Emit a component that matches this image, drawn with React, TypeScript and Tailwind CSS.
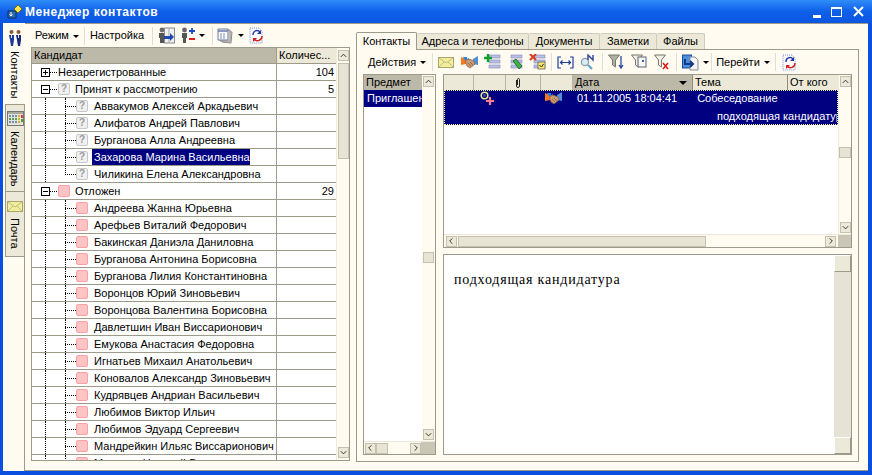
import type { ReactNode } from 'react';

const line = 'border-[#9d9a8a]';

function Caret() {
  return <span className="inline-block w-0 h-0 border-x-[3px] border-x-transparent border-t-[3px] border-t-black ml-[4px] align-middle" />;
}

function Sep({ ml, mr }: { ml: string; mr: string }) {
  return <div className={`w-[2px] h-[18px] bg-[#e2decd] border-r border-white shrink-0 ${ml} ${mr}`} />;
}

function QuestionIcon() {
  return (
    <div className="w-[12px] h-[12px] shrink-0 rounded-[2px] border border-[#c8c8c8] bg-[#f0f0f0] flex items-center justify-center text-[10px] leading-none font-bold text-[#9a9a9a]">
      ?
    </div>
  );
}

function PinkIcon() {
  return <div className="w-[12px] h-[12px] shrink-0 rounded-[2px] border border-[#ff9fa4] bg-[#ffc4c4]" />;
}

function Envelope({ w = 16, h = 11 }: { w?: number; h?: number }) {
  return (
    <svg width={w} height={h} viewBox="0 0 16 11" className="shrink-0">
      <rect x="0.5" y="0.5" width="15" height="10" fill="#f3eda0" stroke="#a8a868" />
      <path d="M1 1l7 5 7-5M1 10l5-5M15 10l-5-5" fill="none" stroke="#c0bd78" />
    </svg>
  );
}

function Handshake() {
  return (
    <svg width="17" height="13" viewBox="0 0 17 13" className="shrink-0">
      <path d="M0 1l5 2v5L0 9z" fill="#f47a1c" />
      <path d="M17 0l-5 3v5l5 1z" fill="#4f8ed8" />
      <path d="M2 1h4v2l2-1v2H4z" fill="#2f7fe0" />
      <path d="M4 5l4-2 5 2 1 3-5 4-3-2z" fill="#c99a78" stroke="#8a5a3c" strokeWidth="0.7" />
      <path d="M7 7l3 3M9 6l3 3" stroke="#8a5a3c" strokeWidth="0.7" />
    </svg>
  );
}

function ListIcon({ kind }: { kind: 'add' | 'edit' | 'del' }) {
  return (
    <svg width="17" height="16" viewBox="0 0 17 16" className="shrink-0">
      <rect x="5" y="1" width="11" height="3" fill="#b9bfe6" stroke="#8088b8" strokeWidth="0.6" />
      <rect x="5" y="6" width="11" height="3" fill="#b9bfe6" stroke="#8088b8" strokeWidth="0.6" />
      <rect x="5" y="11" width="11" height="3" fill="#b9bfe6" stroke="#8088b8" strokeWidth="0.6" />
      {kind === 'add' && <path d="M4 0v8M0 4h8" stroke="#12a02c" strokeWidth="2.4" />}
      {kind === 'edit' && <path d="M7 7l3-2 6 7-3 3z" fill="#36b83c" stroke="#222" strokeWidth="0.6" />}
      {kind === 'del' && (
        <g>
          <path d="M1 0l6 6M7 0L1 6" stroke="#e03a1c" strokeWidth="2" />
          <rect x="9" y="8" width="7" height="7" fill="#f5e66a" stroke="#555" strokeWidth="0.7" />
          <path d="M10.5 11l2 2 2-3" fill="none" stroke="#333" />
        </g>
      )}
    </svg>
  );
}

function WidthIcon() {
  return (
    <svg width="17" height="13" viewBox="0 0 17 13" className="shrink-0">
      <path d="M4 1H1v11h3M13 1h3v11h-3" fill="none" stroke="#1c3f9c" strokeWidth="1.2" />
      <path d="M3.5 6.5h10M5.5 4.5l-2 2 2 2M11.5 4.5l2 2-2 2" fill="none" stroke="#1c3f9c" strokeWidth="1.2" />
    </svg>
  );
}

function SearchN() {
  return (
    <svg width="16" height="16" viewBox="0 0 16 16" className="shrink-0">
      <circle cx="5" cy="8" r="3.6" fill="#d8eef2" stroke="#8aa0a8" strokeWidth="1.3" />
      <path d="M8 11l4 4" stroke="#5aa0c8" strokeWidth="2" />
      <path d="M8 6V1l5 5V1" fill="none" stroke="#2840a0" strokeWidth="1.4" />
    </svg>
  );
}

function Funnel({ kind }: { kind: 'lines' | 'win' | 'x' }) {
  return (
    <svg width="16" height="16" viewBox="0 0 16 16" className="shrink-0">
      <path d="M0.5 1h11l-4 5v7l-3-2V6z" fill={kind === 'lines' ? '#b0b0a4' : '#f2f0e6'} stroke="#77776c" />
      {kind === 'lines' && <path d="M13 2v11M11 11l2 3 2-3" fill="none" stroke="#24489c" strokeWidth="1.3" />}
      {kind === 'win' && (
        <g>
          <rect x="7" y="3" width="8" height="10" fill="#f6f6f4" stroke="#5c6470" />
          <rect x="11" y="6" width="2" height="2" fill="#2f5fae" />
        </g>
      )}
      {kind === 'x' && <path d="M9 9l5 6M14 9l-5 6" stroke="#e01414" strokeWidth="1.5" />}
    </svg>
  );
}

function MoveDoc() {
  return (
    <svg width="17" height="17" viewBox="0 0 17 17" className="shrink-0">
      <rect x="0.5" y="1" width="9" height="13" fill="#4b90e0" stroke="#1c4c9c" />
      <path d="M8 3h5l3 3v10H8z" fill="#f4f4f4" stroke="#8a8a98" />
      <path d="M3 5v5h7M8 7l3 3-3 3" fill="none" stroke="#12388c" strokeWidth="2" />
    </svg>
  );
}

function Refresh() {
  return (
    <svg width="16" height="17" viewBox="0 0 16 17" className="shrink-0">
      <path d="M1 1h9l3 3v12H1z" fill="#fafafc" stroke="#7f8fd8" strokeDasharray="1 1" />
      <path d="M4 8a4 4 0 0 1 7-3" fill="none" stroke="#2036a8" strokeWidth="1.4" />
      <path d="M12 3v4H8z" fill="#2036a8" />
      <path d="M13 9a4.5 4.5 0 0 1-8 3" fill="none" stroke="#d81c1c" strokeWidth="1.4" />
      <path d="M4 15v-4h4z" fill="#d81c1c" />
    </svg>
  );
}

function People() {
  return (
    <svg width="14" height="16" viewBox="0 0 14 16" className="shrink-0">
      <circle cx="3.5" cy="2" r="2" fill="#8a5a3c" />
      <circle cx="10.5" cy="2" r="2" fill="#8a5a3c" />
      <path d="M1 5h5v5l-1 6H3l-1-6z" fill="#1c3c9c" />
      <path d="M8 5h5l-0 5-1 6h-2l-1-6z" fill="#14287c" />
      <path d="M3 5h1v3H3zM10 5h1v3h-1z" fill="#e8e8e8" />
    </svg>
  );
}

function Chart() {
  return (
    <svg width="17" height="15" viewBox="0 0 17 15" className="shrink-0">
      <rect x="0.5" y="0.5" width="16" height="14" fill="#e8e4d4" stroke="#777" />
      <rect x="1" y="1" width="15" height="2" fill="#a8a8a0" />
      {[2, 5, 8, 11].map((x) =>
        [4, 7, 10].map((y) => <rect key={`${x}-${y}`} x={x} y={y} width="2" height="2" fill={x === 11 ? '#d8b030' : y === 7 ? '#5a9a5a' : '#6a90c0'} />),
      )}
      <rect x="14" y="4" width="2" height="3" fill="#d04040" />
      <rect x="14" y="8" width="2" height="3" fill="#40a040" />
    </svg>
  );
}

function FormArrow() {
  return (
    <svg width="17" height="17" viewBox="0 0 17 17" className="shrink-0">
      <circle cx="4" cy="3" r="2.4" fill="#6a6a6a" />
      <path d="M1 6h6v5H6v5H2v-5H1z" fill="#555" />
      <rect x="6.5" y="1" width="10" height="15" fill="#eef0f4" stroke="#8a8a8a" />
      <path d="M11 1v15" stroke="#aaa" />
      <path d="M6 9h6V6l4 4-4 4v-2H6z" fill="#1c48b0" />
    </svg>
  );
}

function PlusMinusPerson() {
  return (
    <svg width="14" height="17" viewBox="0 0 14 17" className="shrink-0">
      <circle cx="3.5" cy="3" r="2.4" fill="#666" />
      <path d="M1 6h5v5H5v5H2v-5H1z" fill="#555" />
      <path d="M11 1v6M8 4h6" stroke="#1c48d0" strokeWidth="1.8" />
      <path d="M8 12h6" stroke="#e01c1c" strokeWidth="2" />
    </svg>
  );
}

function Pages() {
  return (
    <svg width="17" height="16" viewBox="0 0 17 16" className="shrink-0">
      <path d="M5 3l10 1-1 11-9-1z" fill="#e4e0cc" stroke="#888" />
      <path d="M3 2l10 0v11H3z" fill="#f2efe2" stroke="#888" />
      <path d="M1 1h10v11H1z" fill="#fafafa" stroke="#6a7aa0" />
      <path d="M1 3h10" stroke="#7080b0" strokeWidth="1.6" />
      <path d="M3 6h2M6 6h2M3 8h2M6 8h2M3 10h2M6 10h2" stroke="#8090b8" />
    </svg>
  );
}

function KeyPlus() {
  return (
    <svg width="15" height="15" viewBox="0 0 15 15" className="shrink-0">
      <circle cx="4.5" cy="4.5" r="3.3" fill="none" stroke="#e4e488" strokeWidth="1.6" />
      <circle cx="4.5" cy="4.5" r="1.4" fill="#3a4ea8" />
      <path d="M10 6v8M6 10h8" stroke="#ff7f8c" strokeWidth="2.2" />
    </svg>
  );
}

function Clip() {
  return (
    <svg width="6" height="12" viewBox="0 0 6 12" className="shrink-0">
      <path d="M1.5 3v6a1.5 1.5 0 0 0 3 0V2.5a1 1 0 0 0-2 0V8" fill="none" stroke="#222" strokeWidth="1" />
    </svg>
  );
}

function TreeBox({ open }: { open: boolean }) {
  return (
    <div className="w-[9px] h-[9px] shrink-0 border border-black bg-white flex items-center justify-center relative">
      <div className="w-[5px] h-px bg-black" />
      {!open && <div className="absolute w-px h-[5px] bg-black" />}
    </div>
  );
}

function Row({ children, count }: { children: ReactNode; count?: string }) {
  return (
    <div className={`flex h-[17px] shrink-0 border-b ${line}`}>
      <div className={`w-[245px] shrink-0 h-full flex items-center border-r whitespace-nowrap ${line}`}>{children}</div>
      <div className="flex-1 h-full flex items-center justify-end pr-[2px]">{count}</div>
    </div>
  );
}

function Group({ name, count, open, icon }: { name: string; count: string; open: boolean; icon?: ReactNode }) {
  return (
    <Row count={count}>
      <div className="w-[9px] shrink-0" />
      <TreeBox open={open} />
      <div className="w-[7px] border-t border-dotted border-black shrink-0" />
      {icon && <div className="w-[1px]" />}
      {icon}
      <span className={icon ? 'ml-[5px]' : 'ml-[1px]'}>{name}</span>
    </Row>
  );
}

function Child({ name, icon, selected, last }: { name: string; icon: ReactNode; selected?: boolean; last?: boolean }) {
  return (
    <Row>
      <div className="w-[13px] shrink-0" />
      <div className="w-[20px] h-full shrink-0 border-l border-dotted border-black" />
      <div className="w-[11px] h-full shrink-0 relative flex items-center">
        <div className={`absolute left-0 top-0 border-l border-dotted border-black ${last ? 'h-[9px]' : 'h-full'}`} />
        <div className="w-full border-t border-dotted border-black" />
      </div>
      {icon}
      <span className={selected ? 'ml-[4px] pl-[2px] h-[16px] leading-[16px] bg-[#000080] text-white w-[158px]' : 'ml-[6px]'}>{name}</span>
    </Row>
  );
}

function UpBtn({ dir = 'up' }: { dir?: 'up' | 'down' | 'left' | 'right' }) {
  const paths = { up: 'M2 6l3-3 3 3', down: 'M2 3l3 3 3-3', left: 'M6 2L3 5l3 3', right: 'M4 2l3 3-3 3' };
  return (
    <div className="w-[11px] h-[11px] shrink-0 bg-[#ece9d8] border border-[#c4c1b0] flex items-center justify-center">
      <svg width="10" height="10" viewBox="0 0 10 10">
        <path d={paths[dir]} fill="none" stroke="#222" strokeWidth="1" />
      </svg>
    </div>
  );
}

const waiting = ['Аввакумов Алексей Аркадьевич', 'Алифатов Андрей Павлович', 'Бурганова Алла Андреевна', 'Захарова Марина Васильевна', 'Чиликина Елена Александровна'];
const delayed = [
  'Андреева Жанна Юрьевна',
  'Арефьев Виталий Федорович',
  'Бакинская Даниэла Даниловна',
  'Бурганова Антонина Борисовна',
  'Бурганова Лилия Константиновна',
  'Воронцов Юрий Зиновьевич',
  'Воронцова Валентина Борисовна',
  'Давлетшин Иван Виссарионович',
  'Емукова Анастасия Федоровна',
  'Игнатьев Михаил Анатольевич',
  'Коновалов Александр Зиновьевич',
  'Кудрявцев Андриан Васильевич',
  'Любимов Виктор Ильич',
  'Любимов Эдуард Сергеевич',
  'Мандрейкин Ильяс Виссарионович',
  'Миронов Николай Васильевич',
];

const tabs = [
  { name: 'Адреса и телефоны', w: 'w-[112px]' },
  { name: 'Документы', w: 'w-[71px]' },
  { name: 'Заметки', w: 'w-[57px]' },
  { name: 'Файлы', w: 'w-[48px]' },
];

export default function App() {
  return (
    <div className="w-[872px] h-[475px] overflow-hidden flex flex-col bg-[#0b4fe0] font-['Liberation_Sans',sans-serif] text-[11px] text-black">
      <div className="h-[23px] shrink-0 flex items-center bg-gradient-to-b from-[#2f8cf8] via-[#0f5fe8] to-[#0c56e2] pl-[5px] pr-[6px]">
        <svg width="18" height="18" viewBox="0 0 18 18" className="shrink-0">
          <path d="M3 8h8v7H3z" fill="#2a6ab0" stroke="#0c2c60" />
          <path d="M6 9v4M4.5 11.5L6 13l1.5-1.5" stroke="#fff" fill="none" />
          <path d="M13 2l4 4-4 4-4-4z" fill="#ffe84a" stroke="#7a6a10" />
        </svg>
        <span className="ml-[2px] text-white font-bold text-[12px] tracking-[0.55px]">Менеджер контактов</span>
        <div className="ml-auto flex items-center pr-[2px]">
          <div className="w-[8px] h-[3px] bg-white mt-[9px]" />
          <div className="w-[11px] h-[10px] ml-[10px] border border-white border-t-[2px]" />
          <svg width="11" height="11" viewBox="0 0 11 11" className="ml-[11px]">
            <path d="M1 1l9 9M10 1l-9 9" stroke="#fff" strokeWidth="2" />
          </svg>
        </div>
      </div>

      <div className="h-[448px] ml-[3px] mr-[4px] shrink-0 flex bg-[#fffbf0]">
        {/* vertical tabs */}
        <div className="w-[21px] shrink-0 flex flex-col pl-[2px]">
          <div className="h-[81px] -mr-px relative z-10 bg-[#fffbf0] flex flex-col items-center pt-[7px]">
            <People />
            <span className="[writing-mode:vertical-rl] mt-[5px] leading-[14px]">Контакты</span>
          </div>
          <div className={`h-[88px] bg-[#ece9d8] border-l border-b border-t ${line} flex flex-col items-center pt-[6px]`}>
            <Chart />
            <span className="[writing-mode:vertical-rl] mt-[5px] leading-[14px]">Календарь</span>
          </div>
          <div className={`h-[65px] bg-[#ece9d8] border-l border-b ${line} flex flex-col items-center pt-[9px]`}>
            <Envelope />
            <span className="[writing-mode:vertical-rl] mt-[6px] leading-[14px]">Почта</span>
          </div>
        </div>

        <div className={`flex-1 flex border-l border-t border-b ${line}`}>
          {/* left pane */}
          <div className="w-[330px] shrink-0 flex flex-col pl-[6px] pr-[5px]">
            <div className="h-[23px] shrink-0 flex items-center">
              <span className="ml-[4px]">Режим<Caret /></span>
              <Sep ml="ml-[5px]" mr="mr-[4px]" />
              <span>Настройка</span>
              <Sep ml="ml-[8px]" mr="mr-[4px]" />
              <FormArrow />
              <div className="w-[6px]" />
              <PlusMinusPerson />
              <Caret />
              <Sep ml="ml-[7px]" mr="mr-[3px]" />
              <Pages />
              <Caret />
              <div className="w-[5px]" />
              <Refresh />
            </div>
            <div className={`h-[414px] shrink-0 flex border ${line} bg-white overflow-hidden`}>
              <div className="w-[304px] shrink-0 flex flex-col overflow-hidden">
                <div className={`h-[16px] shrink-0 flex bg-[#ece9d8] border-b ${line}`}>
                  <div className={`w-[245px] shrink-0 pl-[2px] bg-[#bdb9a9] border-r ${line} leading-[15px]`}>Кандидат</div>
                  <div className="flex-1 pl-[2px] leading-[15px] whitespace-nowrap overflow-hidden">Количес...</div>
                </div>
                <Group name="Незарегистрованные" count="104" open={false} />
                <Group name="Принят к рассмотрению" count="5" open icon={<QuestionIcon />} />
                {waiting.map((n, i) => (
                  <Child key={n} name={n} icon={<QuestionIcon />} selected={i === 3} last={i === 4} />
                ))}
                <Group name="Отложен" count="29" open icon={<PinkIcon />} />
                {delayed.map((n) => (
                  <Child key={n} name={n} icon={<PinkIcon />} />
                ))}
              </div>
              <div className="flex-1 bg-[#fffbf0] flex flex-col items-center py-[2px] border-l border-[#f0ecdc]">
                <UpBtn />
                <div className="w-[11px] h-[96px] my-[2px] bg-[#e8e4d4] border border-[#c4c1b0]" />
                <div className="flex-1" />
                <UpBtn dir="down" />
              </div>
            </div>
          </div>

          {/* right pane */}
          <div className="flex-1 flex flex-col pl-[1px] pt-[8px] pr-[9px]">
            <div className="h-[17px] shrink-0 flex items-end">
              <div className={`w-[61px] h-[18px] -mb-px relative z-10 border border-b-0 ${line} rounded-t-[2px] bg-[#fffbf0] text-center leading-[16px]`}>Контакты</div>
              {tabs.map((t) => (
                <div key={t.name} className={`${t.w} h-[16px] border-t border-r border-[#cfccbc] rounded-t-[2px] bg-[#ece9d8] text-center leading-[15px]`}>
                  {t.name}
                </div>
              ))}
            </div>
            <div className={`h-[413px] shrink-0 border ${line} flex flex-col`}>
              <div className="h-[24px] shrink-0 flex items-center">
                <span className="ml-[11px]">Действия<Caret /></span>
                <Sep ml="ml-[6px]" mr="mr-[4px]" />
                <Envelope />
                <div className="w-[7px]" />
                <Handshake />
                <div className="w-[6px]" />
                <ListIcon kind="add" />
                <div className="w-[5px]" />
                <ListIcon kind="edit" />
                <div className="w-[6px]" />
                <ListIcon kind="del" />
                <Sep ml="ml-[5px]" mr="mr-[4px]" />
                <WidthIcon />
                <div className="w-[6px]" />
                <SearchN />
                <Sep ml="ml-[6px]" mr="mr-[4px]" />
                <Funnel kind="lines" />
                <div className="w-[7px]" />
                <Funnel kind="win" />
                <div className="w-[7px]" />
                <Funnel kind="x" />
                <Sep ml="ml-[6px]" mr="mr-[4px]" />
                <MoveDoc />
                <Caret />
                <Sep ml="ml-[2px]" mr="mr-[3px]" />
                <span>Перейти<Caret /></span>
                <Sep ml="ml-[5px]" mr="mr-[5px]" />
                <Refresh />
              </div>

              <div className="flex gap-[7px] pl-[6px] pr-[6px] h-[381px]">
                {/* subject list */}
                <div className={`w-[73px] shrink-0 border ${line} flex flex-col`}>
                  <div className="flex-1 flex min-h-0">
                    <div className="w-[58px] shrink-0 bg-white flex flex-col overflow-hidden">
                      <div className="h-[15px] bg-[#bdb9a9] pl-[2px] leading-[15px] shrink-0">Предмет</div>
                      <div className="h-[17px] bg-[#000080] text-white pl-[3px] leading-[16px] whitespace-nowrap overflow-hidden shrink-0">Приглашение</div>
                    </div>
                    <div className="flex-1 flex flex-col items-center py-[1px] bg-[#fffbf0]">
                      <UpBtn />
                      <div className="flex-1 flex items-center">
                        <div className="w-[11px] h-[11px] mt-[-2px] bg-[#e8e4d4] border border-[#c4c1b0]" />
                      </div>
                      <UpBtn dir="down" />
                    </div>
                  </div>
                  <div className="h-[13px] shrink-0 flex items-center bg-[#fffbf0] border-t border-[#ece9d8] pl-[1px]">
                    <UpBtn dir="left" />
                    <div className="w-[12px] h-[11px] bg-[#e8e4d4] border border-[#c4c1b0]" />
                    <div className="flex-1" />
                    <UpBtn dir="right" />
                    <div className="w-[14px] h-full bg-[#c9c6b6]" />
                  </div>
                </div>

                <div className="flex-1 flex flex-col">
                  {/* messages grid */}
                  <div className={`h-[174px] shrink-0 border ${line} flex flex-col`}>
                    <div className="flex-1 flex min-h-0">
                      <div className="w-[394px] shrink-0 bg-white flex flex-col overflow-hidden">
                        <div className="h-[15px] shrink-0 flex bg-[#ece9d8] leading-[15px]">
                          <div className="w-[30px] shrink-0 border-r border-[#b8b5a5]" />
                          <div className="w-[32px] shrink-0 border-r border-[#b8b5a5]" />
                          <div className="w-[35px] shrink-0 border-r border-[#b8b5a5] flex items-center pl-[9px]">
                            <Clip />
                          </div>
                          <div className="w-[32px] shrink-0 border-r border-[#b8b5a5]" />
                          <div className="w-[120px] shrink-0 pl-[2px] bg-[#bdb9a9] border-r border-[#8f8c7c] flex items-center">
                            Дата
                            <span className="ml-auto mr-[5px] w-0 h-0 border-x-[4px] border-x-transparent border-t-[4px] border-t-black" />
                          </div>
                          <div className="w-[95px] shrink-0 pl-[2px] border-r border-[#8f8c7c]">Тема</div>
                          <div className="flex-1 pl-[2px] whitespace-nowrap overflow-hidden">От кого</div>
                        </div>
                        <div className="h-[35px] shrink-0 bg-[#000080] text-white border border-dotted border-[#f4e88c] flex flex-col overflow-hidden">
                          <div className="h-[15px] flex items-center shrink-0 whitespace-nowrap">
                            <div className="w-[35px] shrink-0" />
                            <KeyPlus />
                            <div className="w-[50px] shrink-0" />
                            <Handshake />
                            <div className="w-[15px] shrink-0" />
                            <span>01.11.2005 18:04:41</span>
                            <span className="ml-[20px]">Собеседование</span>
                          </div>
                          <div className="h-[18px] pl-[272px] leading-[18px] pt-px whitespace-nowrap overflow-hidden">подходящая кандидатура</div>
                        </div>
                      </div>
                      <div className="flex-1 flex flex-col items-center py-[1px] bg-[#fffbf0] border-l border-[#f0ecdc]">
                        <UpBtn />
                        <div className="flex-1 pt-[60px]">
                          <div className="w-[12px] h-[11px] bg-[#e8e4d4] border border-[#c4c1b0]" />
                        </div>
                        <UpBtn dir="down" />
                      </div>
                    </div>
                    <div className="h-[13px] shrink-0 flex items-center bg-[#fffbf0] border-t border-[#ece9d8] pl-[2px]">
                      <UpBtn dir="left" />
                      <div className="w-[248px] h-[11px] ml-[1px] bg-[#e8e4d4] border border-[#c4c1b0]" />
                      <div className="flex-1" />
                      <UpBtn dir="right" />
                      <div className="w-[13px] ml-[2px] h-full bg-[#c9c6b6]" />
                    </div>
                  </div>

                  {/* note */}
                  <div className={`mt-[6px] h-[201px] shrink-0 border ${line} bg-white flex`}>
                    <div className="flex-1 pl-[10px] pt-[17px] font-['Liberation_Serif',serif] text-[14px] tracking-[0.8px] leading-[15px]">подходящая кандидатура</div>
                    <div className="w-[17px] shrink-0 bg-[#e6e2d6] flex flex-col justify-between">
                      <div className="h-[17px] bg-[#ece9d8] border border-[#9d9a8a] border-t-white border-l-white" />
                      <div className="h-[17px] bg-[#ece9d8] border border-[#9d9a8a] border-t-white border-l-white" />
                    </div>
                  </div>
                </div>
              </div>
            </div>
          </div>
        </div>
      </div>
    </div>
  );
}
